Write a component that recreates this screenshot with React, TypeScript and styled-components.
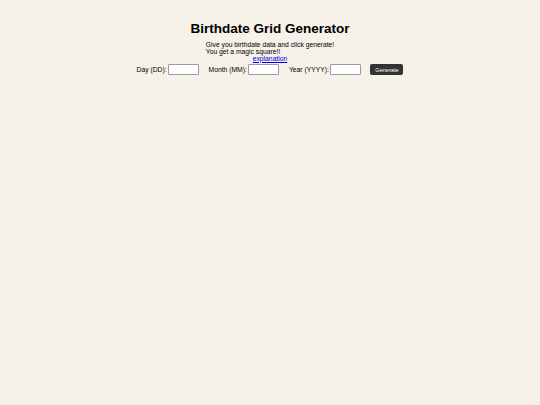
import styled, { createGlobalStyle } from "styled-components"

const GlobalStyle = createGlobalStyle`
    html, body {
        margin: 0;
        padding: 0;
        background-color: #f6f1e9;
        font-family: "Liberation Sans", Arial, sans-serif;
        color: #000;
    }
`

const Page = styled.main`
    display: flex;
    flex-direction: column;
    align-items: center;

    min-height: 405px;
    padding-top: 21px;
    box-sizing: border-box;
`
const Title = styled.h1`
    margin: 0;

    font-size: 13.5px;
    font-weight: 700;
    line-height: normal;
`
const Intro = styled.div`
    display: flex;
    flex-direction: column;
    align-items: center;

    margin-top: 4.8px;

    font-size: 6.75px;
    line-height: 7px;
`
const IntroText = styled.p`
    margin: 0;
    text-align: left;
`
const ExplanationLink = styled.a`
    color: #0000ee;
    text-decoration: underline;
`
const Form = styled.form`
    display: flex;
    flex-direction: row;
    align-items: center;

    margin-top: 2.5px;

    font-size: 6.75px;
`
const Field = styled.div<{ $last?: boolean }>`
    display: flex;
    align-items: center;
    gap: 1.6px;

    margin-right: ${(p) => (p.$last ? "9px" : "9.5px")};
`
const Label = styled.label`
    white-space: nowrap;
`
const DateInput = styled.input`
    width: 31px;
    height: 11px;
    padding: 0;
    box-sizing: border-box;

    background: #fff;
    border: 0.6px solid #9a9a9a;
    border-radius: 1px;
    outline: none;
`
const GenerateButton = styled.button`
    width: 33px;
    height: 11px;
    padding: 0;

    font-family: "Liberation Sans", Arial, sans-serif;
    font-size: 5.6px;
    color: #fff;

    background-color: #333;
    border: none;
    border-radius: 2px;
    cursor: pointer;
`

const fields = [
    { id: "day", label: "Day (DD):" },
    { id: "month", label: "Month (MM):" },
    { id: "year", label: "Year (YYYY):" },
]

export default function App() {
    return (
        <>
            <GlobalStyle />
            <Page>
                <Title>Birthdate Grid Generator</Title>
                <Intro>
                    <IntroText>
                        Give you birthdate data and click generate!
                        <br />
                        You get a magic square!!
                    </IntroText>
                    <ExplanationLink href="#">explanation</ExplanationLink>
                </Intro>
                <Form onSubmit={(e) => e.preventDefault()}>
                    {fields.map(({ id, label }, i) => (
                        <Field key={id} $last={i === fields.length - 1}>
                            <Label htmlFor={id}>{label}</Label>
                            <DateInput id={id} type="text" />
                        </Field>
                    ))}
                    <GenerateButton type="submit">Generate</GenerateButton>
                </Form>
            </Page>
        </>
    )
}
